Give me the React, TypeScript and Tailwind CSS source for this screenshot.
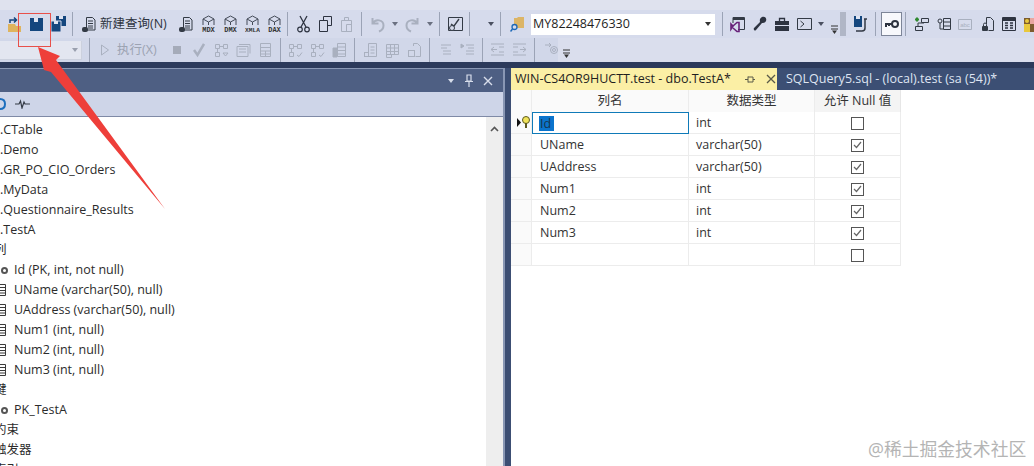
import type { ReactNode } from "react";

const font = { fontFamily: '"Open Sans", "Noto Sans CJK SC", sans-serif' };
const navy = "#14467e";
const ink = "#333a45";
const dim = "#a9b0bf";

function Sep({ className = "" }: { className?: string }) {
  return <div className={`w-px h-[24px] bg-[#9ba3b6] shrink-0 ${className}`} />;
}

function Ico({ className = "", w = 15, children }: { className?: string; w?: number; children: ReactNode }) {
  return (
    <svg width={w} height={18} viewBox={`0 0 ${w} 18`} className={`shrink-0 ${className}`}>
      {children}
    </svg>
  );
}

function Down({ className = "", color = "#4a5060" }: { className?: string; color?: string }) {
  return (
    <svg width={6} height={4} viewBox="0 0 6 4" className={`shrink-0 ${className}`}>
      <path d="M0 0h6L3 4z" fill={color} />
    </svg>
  );
}

function Overflow({ className = "" }: { className?: string }) {
  return (
    <svg width={7} height={10} viewBox="0 0 7 10" className={`shrink-0 self-end mb-[3px] ${className}`}>
      <path d="M0 1h7M0 4h7" stroke="#333" strokeWidth="1" />
      <path d="M1 5.500h5L3.500 9z" fill="#333" />
    </svg>
  );
}

function Save({ className = "" }: { className?: string }) {
  return (
    <Ico w={13} className={className}>
      <path d="M0 3h13v13H0z" fill={navy} />
      <path d="M4 3h4v4H4z" fill="#dfe4f2" />
    </Ico>
  );
}

function DocDb({ className = "" }: { className?: string }) {
  return (
    <Ico className={className}>
      <path d="M5.500 2.500h6l2.500 2.500v10h-8.500z" fill="none" stroke={ink} />
      <path d="M7 6h5M7 8.500h5M7 11h5M7 13h5" stroke={ink} />
      <rect x="1" y="12" width="6" height="5" rx="2" fill={ink} />
    </Ico>
  );
}

function Cube({ label, className = "" }: { label: string; className?: string }) {
  return (
    <Ico className={className}>
      <path d="M7.500 1 13 4v6M2 10V4l5.500-3M2 4l5.500 3L13 4M7.500 7v3" fill="none" stroke="#444b58" />
      <text x="7.500" y="17" textAnchor="middle" fontSize={label.length > 3 ? 6.200 : 7} fontWeight="700" fill="#333" fontFamily="Liberation Mono, monospace">
        {label}
      </text>
    </Ico>
  );
}

function Faded({ kind, className = "" }: { kind: number; className?: string }) {
  return (
    <Ico className={className}>
      {kind === 0 && (
        <g fill="none" stroke={dim}>
          <path d="M1.500 3.500h4v4h-4zM9.500 3.500h4v4h-4zM1.500 11.500h4v4h-4zM5.500 5.500h4M3.500 7.500v4" />
          <path d="M9 12h5l-2.500 3z" />
        </g>
      )}
      {kind === 1 && (
        <g fill="none" stroke={dim}>
          <path d="M1 5.500h11v10H1zM3 3.500h11v9" />
          <path d="M3 8h7M3 11h7" />
        </g>
      )}
      {kind === 2 && (
        <g fill="none" stroke={dim}>
          <path d="M2.500 2.500h10v13h-10zM2.500 6.500h10M2.500 10h10M2.500 13h10M7.500 10v5" />
        </g>
      )}
      {kind === 3 && (
        <g fill="none" stroke={dim}>
          <path d="M1.500 3.500h4v4h-4zM9.500 3.500h4v4h-4zM1.500 11.500h4v4h-4zM5.500 5.500h4M3.500 7.500v4M9 14l2 1.500 3-4" />
        </g>
      )}
      {kind === 4 && (
        <g fill="none" stroke={dim}>
          <path d="M5.500 2.500h8v13h-8zM5.500 6h8M5.500 9.500h8M5.500 13h8" />
          <path d="M1 7h4v9H1z" fill={dim} />
        </g>
      )}
      {kind === 5 && (
        <g fill="none" stroke={dim}>
          <path d="M5.500 2.500h8v13h-8zM7.500 6h4M7.500 9h4M7.500 12h4" />
          <rect x="1.500" y="11.500" width="4" height="4" />
        </g>
      )}
      {kind === 6 && (
        <g fill="none" stroke={dim}>
          <path d="M1.500 3.500h12v10h-12zM1.500 7h12M1.500 10.500h12M5.500 3.500v10M9.500 3.500v10" />
          <path d="M1.500 13.500h5v3h-5z" />
        </g>
      )}
      {kind === 7 && (
        <g fill="none" stroke={dim}>
          <path d="M6.500 5V2.500h4l3 3v10h-5" />
          <rect x="1.500" y="9.500" width="6" height="6" />
        </g>
      )}
      {kind === 8 && <path d="M2 4h10M2 7h6M4 10h8M4 13h8" fill="none" stroke={dim} />}
      {kind === 9 && (
        <g fill="none" stroke={dim}>
          <path d="M6 4h8M8 7h6M6 10h8M6 13h8" />
          <path d="M1 3l3 2-3 2z" fill={dim} />
        </g>
      )}
      {kind === 10 && <path d="M1 3h13M1 14h13M9 6h5M9 11h5M1 8.500h6M4 6 1 8.500 4 11" fill="none" stroke={dim} />}
      {kind === 11 && <path d="M1 3h13M1 14h13M1 6h5M1 11h5M8 8.500h6M11 6l3 2.500-3 2.500" fill="none" stroke={dim} />}
      {kind === 12 && (
        <g fill="none" stroke={dim}>
          <path d="M1 4h6l-2-2M7 4 5 6" />
          <circle cx="10" cy="9" r="3.500" />
          <circle cx="10" cy="9" r="1.500" />
        </g>
      )}
    </Ico>
  );
}

function MenuBar() {
  const items = [
    { t: "项目(P)", c: "ml-[35px]" },
    { t: "表设计器(L)", c: "ml-[22px]" },
    { t: "工具(T)", c: "ml-[22px]" },
    { t: "窗口(W)", c: "ml-[22px]" },
    { t: "帮助(H)", c: "ml-[30px]" },
  ];
  return (
    <div className="h-[10px] overflow-hidden bg-[#dfe2ee] flex items-end pb-[7px] text-[12.500px] leading-[18px] text-[#333]">
      {items.map((m) => (
        <span key={m.t} className={`shrink-0 whitespace-nowrap ${m.c}`}>
          {m.t}
        </span>
      ))}
    </div>
  );
}

function ToolbarTop() {
  return (
    <div className="h-[28px] flex items-center bg-[#d6dbec] overflow-hidden">
      <Ico className="ml-[7px]">
        <path d="M1 9h7l1 2h5v6H1z" fill="#dfb45e" />
        <path d="M3 8V5h6M7 2.500 9.500 5 7 7.500" fill="none" stroke={navy} strokeWidth="1.500" />
      </Ico>
      <Save className="ml-[8px]" />
      <Ico className="ml-[8px]">
        <path d="M5 1h10v10H5z" fill={navy} />
        <path d="M8 1h4v3H8z" fill="#dfe4f2" />
        <path d="M0 6h10v11H0z" fill={navy} stroke="#d6dbec" />
        <path d="M3 6h4v3H3z" fill="#dfe4f2" />
      </Ico>
      <Sep className="ml-[6px]" />
      <DocDb className="ml-[8px]" />
      <span className="ml-[4px] w-[66px] shrink-0 whitespace-nowrap text-[12.500px] text-[#2e3440]">新建查询(N)</span>
      <DocDb className="ml-[12px]" />
      <Cube label="MDX" className="ml-[8px]" />
      <Cube label="DMX" className="ml-[7px]" />
      <Cube label="XMLA" className="ml-[7px]" />
      <Cube label="DAX" className="ml-[7px]" />
      <Sep className="ml-[5px]" />
      <Ico w={13} className="ml-[9px]">
        <path d="M3 1l6 11M10 1 4 12" fill="none" stroke="#2d3340" strokeWidth="1.300" />
        <circle cx="3" cy="14.500" r="2.300" fill="none" stroke="#2d3340" strokeWidth="1.200" />
        <circle cx="10" cy="14.500" r="2.300" fill="none" stroke="#2d3340" strokeWidth="1.200" />
      </Ico>
      <Ico w={13} className="ml-[9px]">
        <path d="M4.500 5V1.500h8v9H9" fill="none" stroke="#2d3340" />
        <path d="M.5 5.500h8v11h-8z" fill="none" stroke="#2d3340" />
      </Ico>
      <Ico w={13} className="ml-[8px]">
        <path d="M1.500 5.500h10v11h-10zM4.500 5.500v-3h4v3" fill="none" stroke={dim} />
        <path d="M6.500 9.500h5v7h-5z" fill="none" stroke={dim} />
      </Ico>
      <Sep className="ml-[8px]" />
      <Ico w={14} className="ml-[9px]">
        <path d="M1.500 3v5.500h6M1.500 8.500c3-5 11-4 11 2 0 3-2 5-4.500 6" fill="none" stroke={dim} strokeWidth="2" />
      </Ico>
      <Down className="ml-[7px]" color="#6a7080" />
      <Ico w={14} className="ml-[7px]">
        <path d="M12.500 3v5.500h-6M12.500 8.500c-3-5-11-4-11 2 0 3 2 5 4.500 6" fill="none" stroke={dim} strokeWidth="2" />
      </Ico>
      <Down className="ml-[8px]" color="#6a7080" />
      <Sep className="ml-[6px]" />
      <Ico className="ml-[8px]">
        <path d="M.5 2.500h14v13H.5z" fill="none" stroke="#333a45" />
        <path d="M3 9l3 2 5-7" fill="none" stroke="#333a45" strokeWidth="1.300" />
        <circle cx="4" cy="13" r="2.500" fill="#d6dbec" stroke="#333a45" />
      </Ico>
      <Sep className="ml-[6px]" />
      <Down className="ml-[18px]" />
      <Sep className="ml-[6px]" />
      <Ico w={14} className="ml-[9px]">
        <path d="M4 3h3l1-1h6v11H4z" fill="#dcb567" />
        <circle cx="4.500" cy="12" r="2.500" fill="#d6dbec" stroke="#1c68b8" strokeWidth="1.300" />
        <path d="M2.500 14 .5 16.500" stroke="#1c68b8" strokeWidth="1.500" />
      </Ico>
      <div className="ml-[7px] w-[184px] h-[21px] shrink-0 bg-white flex items-center pl-[2px] pr-[4px]">
        <span className="flex-1 text-[12.500px] text-[#1e1e1e]">MY82248476330</span>
        <Down color="#333" />
      </div>
      <Sep className="ml-[7px]" />
      <Ico className="ml-[7px]">
        <path d="M3 8V2.500h11.500v12H8" fill="none" stroke="#333a45" />
        <path d="M3 3h11v2H3z" fill="#333a45" />
        <path d="M1 9l2 2-2 3V9zM3 11l4-3.500h2v9H7L3 13" fill="none" stroke="#68217a" strokeWidth="1.600" />
      </Ico>
      <Ico className="ml-[7px]">
        <path d="M10 2c3-1 5 1 4 4-1 2-3 2-4 2L4 15c-1 1.500-3 0-2-2l6-6c-.5-2 0-4 2-5z" fill="#2d3340" />
      </Ico>
      <Ico w={14} className="ml-[8px]">
        <path d="M0 6h14v10H0z" fill="#2d3340" />
        <path d="M4.500 6V3.500h5V6" fill="none" stroke="#2d3340" strokeWidth="1.300" />
        <path d="M0 10.500h14" stroke="#d6dbec" />
      </Ico>
      <Ico className="ml-[8px]">
        <path d="M.5 3.500h14v11H.5z" fill="none" stroke="#333a45" />
        <path d="M3.500 6 7 9l-3.500 3" fill="none" stroke="#333a45" />
      </Ico>
      <Down className="ml-[6px]" />
      <Overflow className="ml-[7px]" />
      <div className="ml-[2px] w-[6px] h-[24px] shrink-0 bg-[radial-gradient(#b0b6c6_1px,transparent_1px)] bg-[length:2px_2px]" />
      <Ico className="ml-[7px]">
        <path d="M1 1h8v11H1z" fill={navy} />
        <path d="M3 1h4v3H3z" fill="#dfe4f2" />
        <path d="M11 4h3M12 4v9c0 2-1 3-3 3H3" fill="none" stroke="#333a45" strokeWidth="1.500" />
      </Ico>
      <Sep className="ml-[7px]" />
      <div className="ml-[5px] w-[21px] h-[24px] shrink-0 bg-[#f7f8fc] border border-[#7d8598] flex items-center justify-center">
        <Ico w={15}>
          <circle cx="11" cy="9" r="3" fill="none" stroke="#2d3340" strokeWidth="2" />
          <path d="M1 9h7M2 9v3M5 9v2" stroke="#2d3340" strokeWidth="2" />
        </Ico>
      </div>
      <Sep className="ml-[3px]" />
      <Ico w={14} className="ml-[9px]">
        <path d="M4 4.500H0M2 2.500v4" stroke="#2f8a2f" strokeWidth="2" />
        <path d="M6.500 3.500h7v4h-7zM.5 11.500h7v4h-7zM3 8v3M3 8h6V7.500" fill="none" stroke="#333a45" />
      </Ico>
      <Ico w={14} className="ml-[8px]">
        <path d="M6.500 3.500h7v11h-7zM6.500 7h7M6.500 11h7" fill="none" stroke="#333a45" />
        <circle cx="3" cy="6" r="2" fill="none" stroke="#333a45" />
        <path d="M3 8v6h3" fill="none" stroke="#333a45" />
      </Ico>
      <Ico w={14} className="ml-[7px]">
        <path d="M.5 4.500h13v10H.5z" fill="none" stroke={dim} />
        <text x="7" y="12" textAnchor="middle" fontSize="6" fill={dim} fontFamily="Liberation Sans, sans-serif">abc</text>
      </Ico>
      <Ico w={14} className="ml-[8px]">
        <path d="M6.500 9V2.500h4l3 3v10h-5" fill="none" stroke="#333a45" />
        <rect x="2" y="11" width="6" height="5" rx="1" fill="#333a45" />
        <path d="M3.500 11V9.500a1.500 1.500 0 0 1 3 0V11" fill="none" stroke="#333a45" />
      </Ico>
      <Ico w={14} className="ml-[8px]">
        <path d="M.5 2.500h13v13H.5z" fill="none" stroke="#2d3340" />
        <path d="M1 3h12v3H1z" fill="#2d3340" />
        <path d="M3 8h3M8 8h3M3 10.500h3M8 10.500h3M3 13h3M8 13h3" stroke="#2d3340" strokeWidth="1.400" />
      </Ico>
      <Ico w={14} className="ml-[8px]">
        <path d="M0 3h14v14H0z" fill="#7c5b2e" />
        <path d="M6 3h8v6H6z" fill="#e9a6a0" />
        <path d="M0 9h6v8H0z" fill="#e8c83c" />
        <circle cx="3" cy="6" r="2" fill="#e8c83c" />
      </Ico>
    </div>
  );
}

function ToolbarSecond() {
  return (
    <div className="h-[24px] flex items-center bg-[#dadeed]">
      <div className="h-full w-[558px] shrink-0 flex items-center bg-[#d1d7e9]">
        <div className="w-[82px] h-[19px] shrink-0 bg-[#e3e6f0] border-r border-b border-[#ccd1de] flex items-center justify-end pr-[3px]">
          <Down color="#9aa0ae" />
        </div>
        <Sep className="ml-[7px]" />
        <svg width={8} height={12} viewBox="0 0 8 12" className="ml-[11px] shrink-0">
          <path d="M.5 1v10L7.500 6z" fill="none" stroke={dim} />
        </svg>
        <span className="ml-[8px] w-[40px] shrink-0 whitespace-nowrap text-[12.500px] text-[#9ca3b2]">执行(X)</span>
        <div className="ml-[16px] w-[8px] h-[8px] shrink-0 bg-[#a5abb9]" />
        <Ico w={12} className="ml-[12px]">
          <path d="M1 9l3.500 5L11 3" fill="none" stroke={dim} strokeWidth="2.500" />
        </Ico>
        <Faded kind={0} className="ml-[9px]" />
        <Faded kind={1} className="ml-[7px]" />
        <Faded kind={2} className="ml-[7px]" />
        <Sep className="ml-[7px]" />
        <Faded kind={3} className="ml-[7px]" />
        <Faded kind={3} className="ml-[7px]" />
        <Faded kind={4} className="ml-[7px]" />
        <Sep className="ml-[7px]" />
        <Faded kind={5} className="ml-[8px]" />
        <Faded kind={6} className="ml-[7px]" />
        <Faded kind={7} className="ml-[7px]" />
        <Sep className="ml-[7px]" />
        <Faded kind={8} className="ml-[9px]" />
        <Faded kind={9} className="ml-[6px]" />
        <Sep className="ml-[7px]" />
        <Faded kind={10} className="ml-[7px]" />
        <Faded kind={11} className="ml-[7px]" />
        <Sep className="ml-[7px]" />
        <Faded kind={12} className="ml-[9px]" />
      </div>
      <Overflow className="ml-[5px]" />
    </div>
  );
}

function TableColIcon() {
  return (
    <svg width={6} height={12} viewBox="0 0 6 12" className="shrink-0">
      <path d="M0 .5h5.500v11H0M0 3.500h5.500M0 6.500h5.500M0 9h5.500" fill="none" stroke="#3a3a3a" />
    </svg>
  );
}

function KeyIcon() {
  return (
    <svg width={7} height={7} viewBox="0 0 7 7" className="shrink-0">
      <circle cx="3.500" cy="3.500" r="2.500" fill="#fff" stroke="#555" strokeWidth="2" />
    </svg>
  );
}

function TreeRow({ icon, clip, children }: { icon?: "key" | "col"; clip?: boolean; children: ReactNode }) {
  return (
    <div className="h-[20px] flex items-center whitespace-nowrap text-[12.500px] text-[#2b2b2b]">
      {icon === "key" && <div className="w-[14px] pl-[1px] flex"><KeyIcon /></div>}
      {icon === "col" && <div className="w-[14px] flex"><TableColIcon /></div>}
      <span className={clip ? "-ml-[6px]" : ""}>{children}</span>
    </div>
  );
}

function LeftPanel() {
  return (
    <div className="w-[505px] shrink-0 flex flex-col border-r-2 border-[#8997b4] overflow-hidden">
      <div className="h-[24px] shrink-0 bg-[#4e5f83] border-t border-[#8997b4] flex items-center justify-end pr-[10px] gap-[9px]">
        <Down color="#d8deeb" className="mr-[1px]" />
        <svg width={10} height={13} viewBox="0 0 10 13">
          <path d="M3 1h4v6H3zM1 7.500h8M5 8v5" fill="none" stroke="#d8deeb" strokeWidth="1.200" />
        </svg>
        <svg width={10} height={10} viewBox="0 0 10 10">
          <path d="M1 1l8 8M9 1 1 9" stroke="#d8deeb" strokeWidth="1.400" />
        </svg>
      </div>
      <div className="h-[25px] shrink-0 bg-[#ced5e8] border-b border-[#7f8aa6] flex items-center">
        <svg width={6} height={12} viewBox="0 0 6 12" className="shrink-0">
          <path d="M0 1c3 0 5 2 5 5s-2 5-5 5" fill="none" stroke="#1c6ebd" strokeWidth="2" />
        </svg>
        <svg width={15} height={10} viewBox="0 0 15 10" className="ml-[9px] shrink-0">
          <path d="M0 5h4l1.500-3L7 9l2-6 1 2h5" fill="none" stroke="#333a45" strokeWidth="1.200" />
        </svg>
      </div>
      <div className="flex-1 flex min-h-0 bg-white">
        <div className="flex-1 overflow-hidden pt-[3px]">
          <TreeRow>.CTable</TreeRow>
          <TreeRow>.Demo</TreeRow>
          <TreeRow>.GR_PO_CIO_Orders</TreeRow>
          <TreeRow>.MyData</TreeRow>
          <TreeRow>.Questionnaire_Results</TreeRow>
          <TreeRow>.TestA</TreeRow>
          <TreeRow clip>列</TreeRow>
          <TreeRow icon="key">Id (PK, int, not null)</TreeRow>
          <TreeRow icon="col">UName (varchar(50), null)</TreeRow>
          <TreeRow icon="col">UAddress (varchar(50), null)</TreeRow>
          <TreeRow icon="col">Num1 (int, null)</TreeRow>
          <TreeRow icon="col">Num2 (int, null)</TreeRow>
          <TreeRow icon="col">Num3 (int, null)</TreeRow>
          <TreeRow clip>键</TreeRow>
          <TreeRow icon="key">PK_TestA</TreeRow>
          <TreeRow clip>约束</TreeRow>
          <TreeRow clip>触发器</TreeRow>
          <TreeRow clip>索引</TreeRow>
        </div>
        <div className="w-[17px] shrink-0 bg-[#eeeeee] flex justify-center pt-[9px]">
          <svg width={9} height={6} viewBox="0 0 9 6">
            <path d="M1 5l3.500-3.500L8 5" fill="none" stroke="#555" strokeWidth="1.600" />
          </svg>
        </div>
      </div>
    </div>
  );
}

const columns = [
  { name: "Id", type: "int", nul: false },
  { name: "UName", type: "varchar(50)", nul: true },
  { name: "UAddress", type: "varchar(50)", nul: true },
  { name: "Num1", type: "int", nul: true },
  { name: "Num2", type: "int", nul: true },
  { name: "Num3", type: "int", nul: true },
  { name: "", type: "", nul: false },
];

function Check({ on }: { on: boolean }) {
  return (
    <div className="w-[13px] h-[13px] border border-[#555] bg-white flex items-center justify-center">
      {on && (
        <svg width={9} height={8} viewBox="0 0 9 8">
          <path d="M1 4l2.500 2.500L8 1" fill="none" stroke="#666" strokeWidth="1.200" />
        </svg>
      )}
    </div>
  );
}

function Designer() {
  return (
    <div className="flex-1 min-w-0 flex flex-col bg-white">
      <div className="h-[22px] shrink-0 flex bg-[#3c4f74] text-[12.500px]">
        <div className="w-[266px] shrink-0 bg-[#fbefa5] flex items-center pl-[4px] text-[#1e1e1e] whitespace-nowrap">
          <span className="flex-1">WIN-CS4OR9HUCTT.test - dbo.TestA*</span>
          <svg width={10} height={9} viewBox="0 0 10 9" className="mr-[11px] shrink-0">
            <path d="M0 4.500h3M3 1.500v6M3 2h5v5H3M8 4.500h2" fill="none" stroke="#5a5a48" />
          </svg>
          <svg width={10} height={10} viewBox="0 0 10 10" className="mr-[1px] shrink-0">
            <path d="M1 1l8 8M9 1 1 9" stroke="#5a5a48" strokeWidth="1.300" />
          </svg>
        </div>
        <span className="ml-[9px] self-center whitespace-nowrap text-[#dfe5f2]">SQLQuery5.sql - (local).test (sa (54))*</span>
      </div>
      <div className="grid grid-cols-[21px_157px_126px_86px] w-[390px] text-[12.500px] text-[#333]">
        <div className="h-[22px] bg-[#fafafa] border-r border-[#ececec]" />
        <div className="h-[22px] bg-[#fafafa] border-r border-[#ececec] flex items-center justify-center pt-[1px]">列名</div>
        <div className="h-[22px] bg-[#fafafa] border-r border-[#ececec] flex items-center justify-center pt-[1px]">数据类型</div>
        <div className="h-[22px] bg-[#f4f4f4] border-r border-[#e6e6e6] flex items-center justify-center pt-[1px]">允许 Null 值</div>
        {columns.map((c, i) => (
          <div key={i} className="contents">
            <div className="h-[22px] bg-[#fafafa] border-r border-b border-[#ececec] flex items-center justify-end">
              {i === 0 && (
                <svg width={15} height={13} viewBox="0 0 15 13">
                  <path d="M1 2v9l4-4.500z" fill="#111" />
                  <circle cx="10" cy="4" r="3.500" fill="#f1e35a" stroke="#5d5a20" />
                  <path d="M10 7v5" stroke="#5d5a20" strokeWidth="2" />
                </svg>
              )}
            </div>
            {i === 0 ? (
              <div className="h-[22px] border border-[#0f7ab8] flex items-center pl-[6px] pt-[1px]">
                <span className="bg-[#0b74cc] text-[#16344f] leading-[15px] px-[1px] pr-[3px]">Id</span>
              </div>
            ) : (
              <div className="h-[22px] border-r border-b border-[#ececec] flex items-center pl-[8px] pt-[2px]">{c.name}</div>
            )}
            <div className="h-[22px] border-r border-b border-[#ececec] flex items-center pl-[7px] pt-[2px]">{c.type}</div>
            <div className="h-[22px] border-r border-b border-[#ececec] flex items-center justify-center pt-[1px]">
              <Check on={c.nul} />
            </div>
          </div>
        ))}
      </div>
    </div>
  );
}

export default function App() {
  return (
    <div className="relative w-[1034px] h-[466px] overflow-hidden flex flex-col bg-white" style={font}>
      <MenuBar />
      <ToolbarTop />
      <ToolbarSecond />
      <div className="h-[6px] shrink-0 bg-[#2c3a5b]" />
      <div className="flex-1 min-h-0 flex">
        <LeftPanel />
        <div className="w-[6px] shrink-0 bg-[#3c4e73]" />
        <Designer />
      </div>

      {/* 红框和箭头 */}
      <div className="absolute left-[18px] top-[13px] w-[33px] h-[34px] border border-[#e8504a]" />
      <svg width={170} height={215} viewBox="0 0 170 215" className="absolute left-0 top-0">
        <path d="M38 47 60 56 56 60 165 209 51 72 44 70z" fill="#ee3f3a" />
      </svg>
      <div className="absolute left-[868px] top-[437px] text-[17.800px] leading-[24px] text-[#b4b4b4] whitespace-nowrap">
        @稀土掘金技术社区
      </div>
    </div>
  );
}
